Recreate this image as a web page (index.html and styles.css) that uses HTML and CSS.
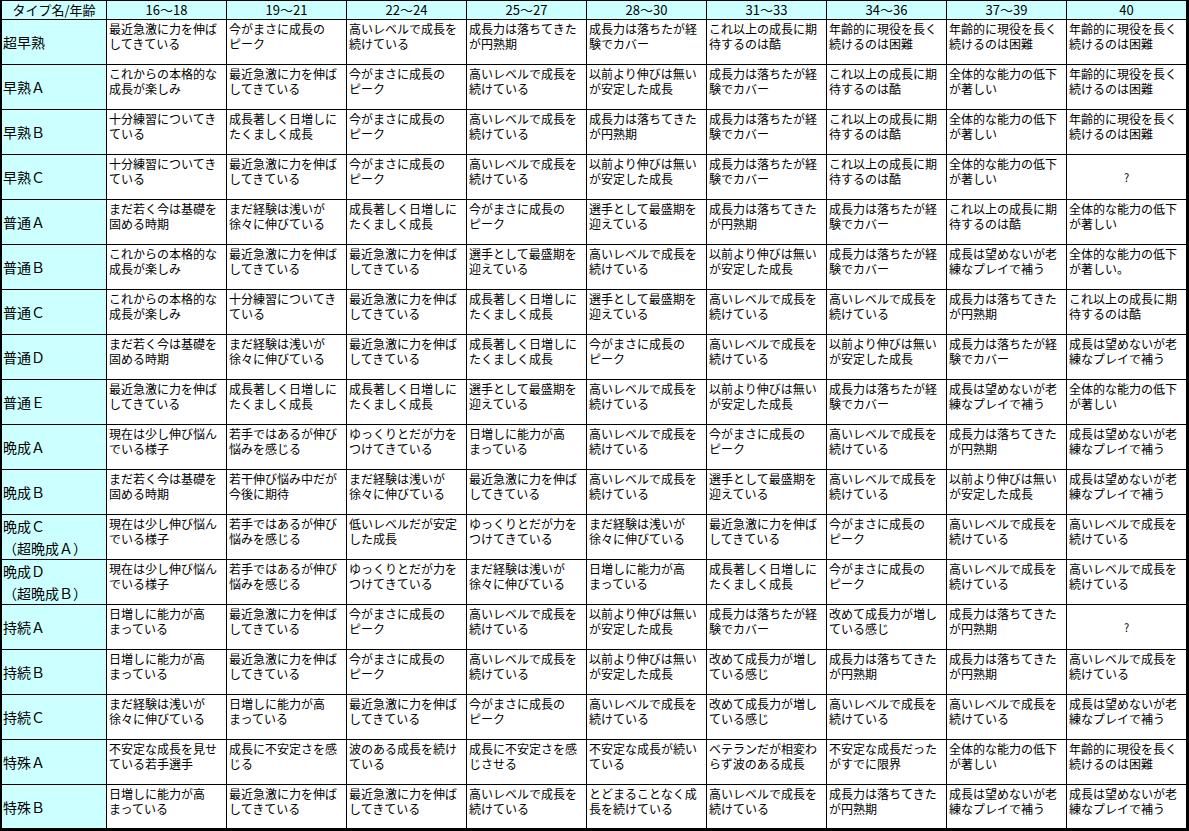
FILE: index.html
```html
<!DOCTYPE html>
<html lang="ja">
<head>
<meta charset="utf-8">
<title>成長タイプ表</title>
<link rel="stylesheet" href="styles.css">
</head>
<body>
<div class="sheet">
  <div class="hd">タイプ名/年齢</div>
  <div class="hd">16〜18</div>
  <div class="hd">19〜21</div>
  <div class="hd">22〜24</div>
  <div class="hd">25〜27</div>
  <div class="hd">28〜30</div>
  <div class="hd">31〜33</div>
  <div class="hd">34〜36</div>
  <div class="hd">37〜39</div>
  <div class="hd">40</div>

  <div class="lb">超早熟</div>
  <div class="c">最近急激に力を伸ば<br>してきている</div>
  <div class="c">今がまさに成長の<br>ピーク</div>
  <div class="c">高いレベルで成長を<br>続けている</div>
  <div class="c">成長力は落ちてきた<br>が円熟期</div>
  <div class="c">成長力は落ちたが経<br>験でカバー</div>
  <div class="c">これ以上の成長に期<br>待するのは酷</div>
  <div class="c">年齢的に現役を長く<br>続けるのは困難</div>
  <div class="c">年齢的に現役を長く<br>続けるのは困難</div>
  <div class="c">年齢的に現役を長く<br>続けるのは困難</div>

  <div class="lb">早熟Ａ</div>
  <div class="c">これからの本格的な<br>成長が楽しみ</div>
  <div class="c">最近急激に力を伸ば<br>してきている</div>
  <div class="c">今がまさに成長の<br>ピーク</div>
  <div class="c">高いレベルで成長を<br>続けている</div>
  <div class="c">以前より伸びは無い<br>が安定した成長</div>
  <div class="c">成長力は落ちたが経<br>験でカバー</div>
  <div class="c">これ以上の成長に期<br>待するのは酷</div>
  <div class="c">全体的な能力の低下<br>が著しい</div>
  <div class="c">年齢的に現役を長く<br>続けるのは困難</div>

  <div class="lb">早熟Ｂ</div>
  <div class="c">十分練習についてき<br>ている</div>
  <div class="c">成長著しく日増しに<br>たくましく成長</div>
  <div class="c">今がまさに成長の<br>ピーク</div>
  <div class="c">高いレベルで成長を<br>続けている</div>
  <div class="c">成長力は落ちてきた<br>が円熟期</div>
  <div class="c">成長力は落ちたが経<br>験でカバー</div>
  <div class="c">これ以上の成長に期<br>待するのは酷</div>
  <div class="c">全体的な能力の低下<br>が著しい</div>
  <div class="c">年齢的に現役を長く<br>続けるのは困難</div>

  <div class="lb">早熟Ｃ</div>
  <div class="c">十分練習についてき<br>ている</div>
  <div class="c">最近急激に力を伸ば<br>してきている</div>
  <div class="c">今がまさに成長の<br>ピーク</div>
  <div class="c">高いレベルで成長を<br>続けている</div>
  <div class="c">以前より伸びは無い<br>が安定した成長</div>
  <div class="c">成長力は落ちたが経<br>験でカバー</div>
  <div class="c">これ以上の成長に期<br>待するのは酷</div>
  <div class="c">全体的な能力の低下<br>が著しい</div>
  <div class="c q">?</div>

  <div class="lb">普通Ａ</div>
  <div class="c">まだ若く今は基礎を<br>固める時期</div>
  <div class="c">まだ経験は浅いが<br>徐々に伸びている</div>
  <div class="c">成長著しく日増しに<br>たくましく成長</div>
  <div class="c">今がまさに成長の<br>ピーク</div>
  <div class="c">選手として最盛期を<br>迎えている</div>
  <div class="c">成長力は落ちてきた<br>が円熟期</div>
  <div class="c">成長力は落ちたが経<br>験でカバー</div>
  <div class="c">これ以上の成長に期<br>待するのは酷</div>
  <div class="c">全体的な能力の低下<br>が著しい</div>

  <div class="lb">普通Ｂ</div>
  <div class="c">これからの本格的な<br>成長が楽しみ</div>
  <div class="c">最近急激に力を伸ば<br>してきている</div>
  <div class="c">最近急激に力を伸ば<br>してきている</div>
  <div class="c">選手として最盛期を<br>迎えている</div>
  <div class="c">高いレベルで成長を<br>続けている</div>
  <div class="c">以前より伸びは無い<br>が安定した成長</div>
  <div class="c">成長力は落ちたが経<br>験でカバー</div>
  <div class="c">成長は望めないが老<br>練なプレイで補う</div>
  <div class="c">全体的な能力の低下<br>が著しい。</div>

  <div class="lb">普通Ｃ</div>
  <div class="c">これからの本格的な<br>成長が楽しみ</div>
  <div class="c">十分練習についてき<br>ている</div>
  <div class="c">最近急激に力を伸ば<br>してきている</div>
  <div class="c">成長著しく日増しに<br>たくましく成長</div>
  <div class="c">選手として最盛期を<br>迎えている</div>
  <div class="c">高いレベルで成長を<br>続けている</div>
  <div class="c">高いレベルで成長を<br>続けている</div>
  <div class="c">成長力は落ちてきた<br>が円熟期</div>
  <div class="c">これ以上の成長に期<br>待するのは酷</div>

  <div class="lb">普通Ｄ</div>
  <div class="c">まだ若く今は基礎を<br>固める時期</div>
  <div class="c">まだ経験は浅いが<br>徐々に伸びている</div>
  <div class="c">最近急激に力を伸ば<br>してきている</div>
  <div class="c">成長著しく日増しに<br>たくましく成長</div>
  <div class="c">今がまさに成長の<br>ピーク</div>
  <div class="c">高いレベルで成長を<br>続けている</div>
  <div class="c">以前より伸びは無い<br>が安定した成長</div>
  <div class="c">成長力は落ちたが経<br>験でカバー</div>
  <div class="c">成長は望めないが老<br>練なプレイで補う</div>

  <div class="lb">普通Ｅ</div>
  <div class="c">最近急激に力を伸ば<br>してきている</div>
  <div class="c">成長著しく日増しに<br>たくましく成長</div>
  <div class="c">成長著しく日増しに<br>たくましく成長</div>
  <div class="c">選手として最盛期を<br>迎えている</div>
  <div class="c">高いレベルで成長を<br>続けている</div>
  <div class="c">以前より伸びは無い<br>が安定した成長</div>
  <div class="c">成長力は落ちたが経<br>験でカバー</div>
  <div class="c">成長は望めないが老<br>練なプレイで補う</div>
  <div class="c">全体的な能力の低下<br>が著しい</div>

  <div class="lb">晩成Ａ</div>
  <div class="c">現在は少し伸び悩ん<br>でいる様子</div>
  <div class="c">若手ではあるが伸び<br>悩みを感じる</div>
  <div class="c">ゆっくりとだが力を<br>つけてきている</div>
  <div class="c">日増しに能力が高<br>まっている</div>
  <div class="c">高いレベルで成長を<br>続けている</div>
  <div class="c">今がまさに成長の<br>ピーク</div>
  <div class="c">高いレベルで成長を<br>続けている</div>
  <div class="c">成長力は落ちてきた<br>が円熟期</div>
  <div class="c">成長は望めないが老<br>練なプレイで補う</div>

  <div class="lb">晩成Ｂ</div>
  <div class="c">まだ若く今は基礎を<br>固める時期</div>
  <div class="c">若干伸び悩み中だが<br>今後に期待</div>
  <div class="c">まだ経験は浅いが<br>徐々に伸びている</div>
  <div class="c">最近急激に力を伸ば<br>してきている</div>
  <div class="c">高いレベルで成長を<br>続けている</div>
  <div class="c">選手として最盛期を<br>迎えている</div>
  <div class="c">高いレベルで成長を<br>続けている</div>
  <div class="c">以前より伸びは無い<br>が安定した成長</div>
  <div class="c">成長は望めないが老<br>練なプレイで補う</div>

  <div class="lb"><span>晩成Ｃ</span><span>（超晩成Ａ）</span></div>
  <div class="c">現在は少し伸び悩ん<br>でいる様子</div>
  <div class="c">若手ではあるが伸び<br>悩みを感じる</div>
  <div class="c">低いレベルだが安定<br>した成長</div>
  <div class="c">ゆっくりとだが力を<br>つけてきている</div>
  <div class="c">まだ経験は浅いが<br>徐々に伸びている</div>
  <div class="c">最近急激に力を伸ば<br>してきている</div>
  <div class="c">今がまさに成長の<br>ピーク</div>
  <div class="c">高いレベルで成長を<br>続けている</div>
  <div class="c">高いレベルで成長を<br>続けている</div>

  <div class="lb"><span>晩成Ｄ</span><span>（超晩成Ｂ）</span></div>
  <div class="c">現在は少し伸び悩ん<br>でいる様子</div>
  <div class="c">若手ではあるが伸び<br>悩みを感じる</div>
  <div class="c">ゆっくりとだが力を<br>つけてきている</div>
  <div class="c">まだ経験は浅いが<br>徐々に伸びている</div>
  <div class="c">日増しに能力が高<br>まっている</div>
  <div class="c">成長著しく日増しに<br>たくましく成長</div>
  <div class="c">今がまさに成長の<br>ピーク</div>
  <div class="c">高いレベルで成長を<br>続けている</div>
  <div class="c">高いレベルで成長を<br>続けている</div>

  <div class="lb">持続Ａ</div>
  <div class="c">日増しに能力が高<br>まっている</div>
  <div class="c">最近急激に力を伸ば<br>してきている</div>
  <div class="c">今がまさに成長の<br>ピーク</div>
  <div class="c">高いレベルで成長を<br>続けている</div>
  <div class="c">以前より伸びは無い<br>が安定した成長</div>
  <div class="c">成長力は落ちたが経<br>験でカバー</div>
  <div class="c">改めて成長力が増し<br>ている感じ</div>
  <div class="c">成長力は落ちてきた<br>が円熟期</div>
  <div class="c q">?</div>

  <div class="lb">持続Ｂ</div>
  <div class="c">日増しに能力が高<br>まっている</div>
  <div class="c">最近急激に力を伸ば<br>してきている</div>
  <div class="c">今がまさに成長の<br>ピーク</div>
  <div class="c">高いレベルで成長を<br>続けている</div>
  <div class="c">以前より伸びは無い<br>が安定した成長</div>
  <div class="c">改めて成長力が増し<br>ている感じ</div>
  <div class="c">成長力は落ちてきた<br>が円熟期</div>
  <div class="c">成長力は落ちてきた<br>が円熟期</div>
  <div class="c">高いレベルで成長を<br>続けている</div>

  <div class="lb">持続Ｃ</div>
  <div class="c">まだ経験は浅いが<br>徐々に伸びている</div>
  <div class="c">日増しに能力が高<br>まっている</div>
  <div class="c">最近急激に力を伸ば<br>してきている</div>
  <div class="c">今がまさに成長の<br>ピーク</div>
  <div class="c">高いレベルで成長を<br>続けている</div>
  <div class="c">改めて成長力が増し<br>ている感じ</div>
  <div class="c">高いレベルで成長を<br>続けている</div>
  <div class="c">高いレベルで成長を<br>続けている</div>
  <div class="c">成長は望めないが老<br>練なプレイで補う</div>

  <div class="lb">特殊Ａ</div>
  <div class="c">不安定な成長を見せ<br>ている若手選手</div>
  <div class="c">成長に不安定さを感<br>じる</div>
  <div class="c">波のある成長を続け<br>ている</div>
  <div class="c">成長に不安定さを感<br>じさせる</div>
  <div class="c">不安定な成長が続い<br>ている</div>
  <div class="c">ベテランだが相変わ<br>らず波のある成長</div>
  <div class="c">不安定な成長だった<br>がすでに限界</div>
  <div class="c">全体的な能力の低下<br>が著しい</div>
  <div class="c">年齢的に現役を長く<br>続けるのは困難</div>

  <div class="lb">特殊Ｂ</div>
  <div class="c">日増しに能力が高<br>まっている</div>
  <div class="c">最近急激に力を伸ば<br>してきている</div>
  <div class="c">最近急激に力を伸ば<br>してきている</div>
  <div class="c">高いレベルで成長を<br>続けている</div>
  <div class="c">とどまることなく成<br>長を続けている</div>
  <div class="c">高いレベルで成長を<br>続けている</div>
  <div class="c">成長力は落ちてきた<br>が円熟期</div>
  <div class="c">成長は望めないが老<br>練なプレイで補う</div>
  <div class="c">成長は望めないが老<br>練なプレイで補う</div>
</div>
</body>
</html>
```

FILE: styles.css
```css
html, body {
  margin: 0;
  padding: 0;
  background: #ffffff;
}

body {
  font-family: "Noto Sans CJK JP", "Noto Sans", sans-serif;
  color: #000000;
}

.sheet {
  display: grid;
  grid-template-columns: 104px repeat(9, 119px);
  grid-template-rows: 18px repeat(17, 44px) 43px;
  gap: 1px;
  padding: 1px 3px 3px 2px;
  background: #000000;
  width: max-content;
}

.hd {
  background: #ccffff;
  font-size: 13px;
  line-height: 18px;
  text-align: center;
  white-space: nowrap;
  overflow: hidden;
}

.lb {
  background: #ccffff;
  font-size: 14px;
  line-height: 22px;
  display: flex;
  flex-direction: column;
  justify-content: center;
  padding-left: 1px;
  white-space: nowrap;
  overflow: hidden;
}

.c {
  background: #ffffff;
  font-size: 12px;
  line-height: 15px;
  padding: 1px 0 0 2px;
  white-space: nowrap;
  overflow: hidden;
}

.q {
  display: flex;
  align-items: center;
  justify-content: center;
  padding: 0;
  font-size: 11px;
}
```
